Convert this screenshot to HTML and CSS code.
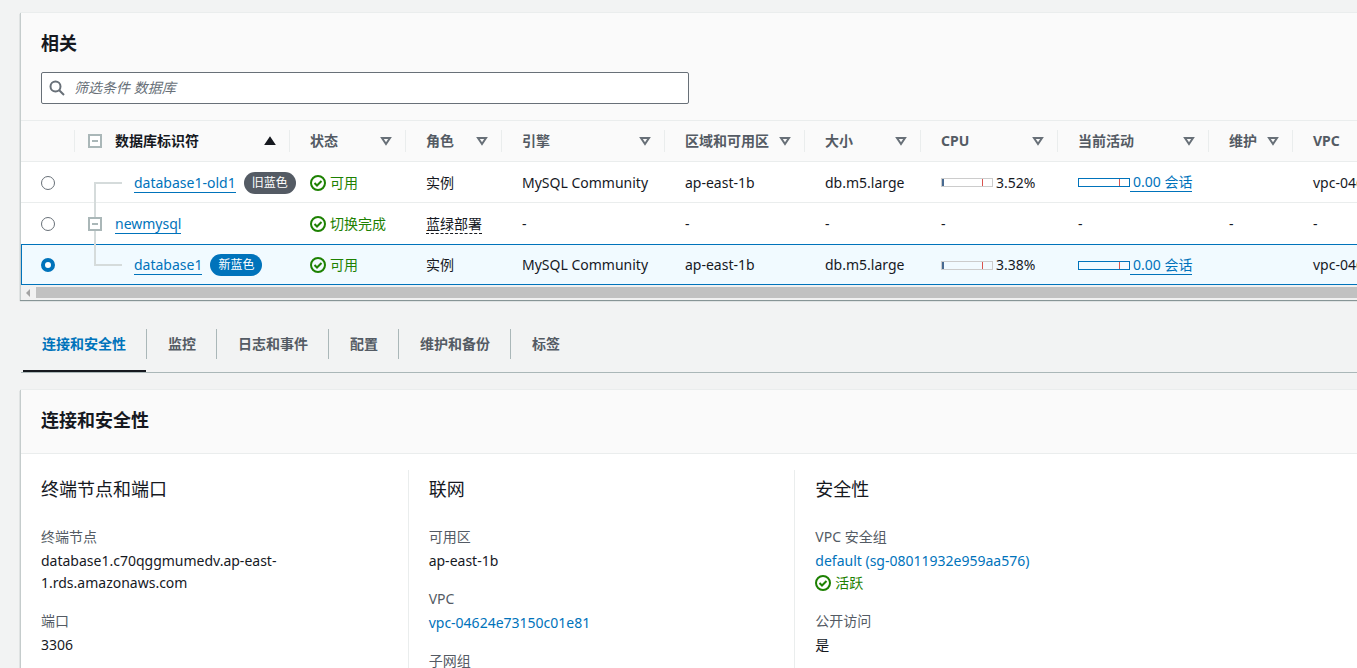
FILE: index.html
```html
<!DOCTYPE html>
<html lang="zh-CN">

<head>
    <meta charset="UTF-8">
    <meta name="viewport" content="width=device-width, initial-scale=1.0">
    <title>database1 - RDS</title>
    <link rel="stylesheet" href="styles.css">
</head>

<body>
    <svg class="sprite" aria-hidden="true">
        <symbol id="icon-ok" viewBox="0 0 16 16">
            <circle cx="8" cy="8" r="7" />
            <path d="M4.5 8l2.5 2.5L11.5 6" />
        </symbol>
        <symbol id="icon-sort" viewBox="0 0 12 10">
            <path d="M2 2h8L6 8z" />
        </symbol>
        <symbol id="icon-toggle" viewBox="0 0 14 14">
            <path d="M1 1h12v12H1zM4 7h6" />
        </symbol>
    </svg>

    <main class="page">
        <section class="panel">
            <header class="panel-header">
                <h2>相关</h2>
                <div class="search">
                    <svg class="search-icon" viewBox="0 0 16 16" aria-hidden="true">
                        <circle cx="6.5" cy="6.5" r="5" />
                        <path d="M10.2 10.2l4.8 4.8" />
                    </svg>
                    <input type="text" class="search-input" placeholder="筛选条件 数据库" aria-label="筛选条件 数据库">
                </div>
            </header>
            <div class="table-wrap">
                <table class="db-table">
                    <colgroup>
                        <col class="col-select">
                        <col class="col-name">
                        <col class="col-status">
                        <col class="col-role">
                        <col class="col-engine">
                        <col class="col-zone">
                        <col class="col-size">
                        <col class="col-cpu">
                        <col class="col-activity">
                        <col class="col-maint">
                        <col class="col-vpc">
                    </colgroup>
                    <thead>
                        <tr>
                            <th></th>
                            <th>
                                <div class="head head-name">
                                    <button class="toggle" aria-label="全部折叠"><svg><use href="#icon-toggle" /></svg></button>
                                    <button class="sort sorted">数据库标识符<svg><use href="#icon-sort" /></svg></button>
                                </div>
                            </th>
                            <th><div class="head"><button class="sort">状态<svg><use href="#icon-sort" /></svg></button></div></th>
                            <th><div class="head"><button class="sort">角色<svg><use href="#icon-sort" /></svg></button></div></th>
                            <th><div class="head"><button class="sort">引擎<svg><use href="#icon-sort" /></svg></button></div></th>
                            <th><div class="head"><button class="sort">区域和可用区<svg><use href="#icon-sort" /></svg></button></div></th>
                            <th><div class="head"><button class="sort">大小<svg><use href="#icon-sort" /></svg></button></div></th>
                            <th><div class="head"><button class="sort">CPU<svg><use href="#icon-sort" /></svg></button></div></th>
                            <th><div class="head"><button class="sort">当前活动<svg><use href="#icon-sort" /></svg></button></div></th>
                            <th><div class="head"><button class="sort">维护<svg><use href="#icon-sort" /></svg></button></div></th>
                            <th><div class="head"><button class="sort">VPC<svg><use href="#icon-sort" /></svg></button></div></th>
                        </tr>
                    </thead>
                    <tbody>
                        <tr>
                            <td class="cell-select"><input type="radio" name="db" aria-label="database1-old1"></td>
                            <td class="cell-name">
                                <span class="branch branch-down"></span>
                                <div class="name child"><a href="#">database1-old1</a><span class="badge badge-old">旧蓝色</span></div>
                            </td>
                            <td><span class="status"><svg><use href="#icon-ok" /></svg>可用</span></td>
                            <td>实例</td>
                            <td>MySQL Community</td>
                            <td>ap-east-1b</td>
                            <td>db.m5.large</td>
                            <td><div class="usage"><span class="bar"><span class="bar-fill" style="width: 3.52%"></span></span>3.52%</div></td>
                            <td><a class="usage usage-link" href="#"><span class="bar"></span><span class="usage-text">0.00 会话</span></a></td>
                            <td></td>
                            <td>vpc-04624e73150c01e81</td>
                        </tr>
                        <tr>
                            <td class="cell-select"><input type="radio" name="db" aria-label="newmysql"></td>
                            <td class="cell-name">
                                <span class="branch branch-through"></span>
                                <div class="name"><button class="toggle" aria-label="折叠"><svg><use href="#icon-toggle" /></svg></button><a href="#">newmysql</a></div>
                            </td>
                            <td><span class="status"><svg><use href="#icon-ok" /></svg>切换完成</span></td>
                            <td><span class="hint">蓝绿部署</span></td>
                            <td>-</td>
                            <td>-</td>
                            <td>-</td>
                            <td>-</td>
                            <td>-</td>
                            <td>-</td>
                            <td>-</td>
                        </tr>
                        <tr class="selected">
                            <td class="cell-select"><input type="radio" name="db" aria-label="database1" checked></td>
                            <td class="cell-name">
                                <span class="branch branch-up"></span>
                                <div class="name child"><a href="#">database1</a><span class="badge badge-new">新蓝色</span></div>
                            </td>
                            <td><span class="status"><svg><use href="#icon-ok" /></svg>可用</span></td>
                            <td>实例</td>
                            <td>MySQL Community</td>
                            <td>ap-east-1b</td>
                            <td>db.m5.large</td>
                            <td><div class="usage"><span class="bar"><span class="bar-fill" style="width: 3.38%"></span></span>3.38%</div></td>
                            <td><a class="usage usage-link" href="#"><span class="bar"></span><span class="usage-text">0.00 会话</span></a></td>
                            <td></td>
                            <td>vpc-04624e73150c01e81</td>
                        </tr>
                    </tbody>
                </table>
            </div>
            <div class="scrollbar">
                <svg class="scroll-arrow" viewBox="0 0 4 8" aria-hidden="true"><path d="M4 0v8L0 4z" /></svg>
                <div class="scroll-thumb"></div>
            </div>
        </section>

        <nav class="tabs">
            <a href="#" class="tab active"><span>连接和安全性</span></a>
            <a href="#" class="tab"><span>监控</span></a>
            <a href="#" class="tab"><span>日志和事件</span></a>
            <a href="#" class="tab"><span>配置</span></a>
            <a href="#" class="tab"><span>维护和备份</span></a>
            <a href="#" class="tab"><span>标签</span></a>
        </nav>

        <section class="panel">
            <header class="panel-header panel-header-plain">
                <h2>连接和安全性</h2>
            </header>
            <div class="details">
                <div class="detail-col">
                    <h3>终端节点和端口</h3>
                    <dl>
                        <dt>终端节点</dt>
                        <dd class="endpoint">database1.c70qggmumedv.ap-east-1.rds.amazonaws.com</dd>
                        <dt>端口</dt>
                        <dd>3306</dd>
                    </dl>
                </div>
                <div class="detail-col">
                    <h3>联网</h3>
                    <dl>
                        <dt>可用区</dt>
                        <dd>ap-east-1b</dd>
                        <dt>VPC</dt>
                        <dd><a href="#">vpc-04624e73150c01e81</a></dd>
                        <dt>子网组</dt>
                        <dd>default</dd>
                    </dl>
                </div>
                <div class="detail-col">
                    <h3>安全性</h3>
                    <dl>
                        <dt>VPC 安全组</dt>
                        <dd><a href="#">default (sg-08011932e959aa576)</a></dd>
                        <dd><span class="status"><svg><use href="#icon-ok" /></svg>活跃</span></dd>
                        <dt>公开访问</dt>
                        <dd>是</dd>
                    </dl>
                </div>
            </div>
        </section>
    </main>
</body>

</html>
```

FILE: styles.css
```css
* {
    box-sizing: border-box;
}

body {
    margin: 0;
    height: 100vh;
    overflow: hidden;
    background-color: #f2f3f3;
    color: #16191f;
    font-family: "Noto Sans", "Noto Sans CJK SC", sans-serif;
    font-size: 14px;
    line-height: 22px;
}

a {
    color: #0073bb;
    text-decoration: none;
}

button {
    padding: 0;
    border: 0;
    background: none;
    color: inherit;
    font: inherit;
}

h2,
h3,
dl,
dd {
    margin: 0;
}

h2 {
    font-size: 18px;
    line-height: 22px;
}

.sprite {
    display: none;
}

.page {
    padding: 13px 0 0 20px;
}

.panel {
    background-color: #fff;
    border-left: 1px solid #c5cccc;
    box-shadow: 0 -1px 0 #eaeded, 0 1px 1px #879596;
}

.panel-header {
    padding: 19px 20px 16px;
    background-color: #fafafa;
    border-bottom: 1px solid #eaeded;
}

.panel-header-plain {
    padding-bottom: 22px;
}

/* search box */
.search {
    display: flex;
    align-items: center;
    gap: 9px;
    max-width: 648px;
    height: 32px;
    margin-top: 18px;
    padding: 0 7px;
    background-color: #fff;
    border: 1px solid #687078;
    border-radius: 2px;
}

.search-icon {
    width: 16px;
    height: 16px;
    fill: none;
    stroke: #687078;
    stroke-width: 2;
}

.search-input {
    flex: 1;
    padding: 0;
    border: 0;
    outline: 0;
    background: none;
    font: inherit;
}

.search-input::placeholder {
    color: #687078;
    font-style: italic;
}

/* table */
.table-wrap {
    overflow: hidden;
}

.db-table {
    width: 1480px;
    table-layout: fixed;
    border-collapse: separate;
    border-spacing: 0;
    white-space: nowrap;
}

.col-select { width: 53px; }
.col-name { width: 215px; }
.col-status { width: 116px; }
.col-role { width: 96px; }
.col-engine { width: 163px; }
.col-zone { width: 140px; }
.col-size { width: 116px; }
.col-cpu { width: 137px; }
.col-activity { width: 151px; }
.col-maint { width: 84px; }

.db-table th {
    height: 41px;
    padding: 0;
    background-color: #fafafa;
    border-bottom: 1px solid #eaeded;
    color: #545b64;
    text-align: left;
}

.head {
    display: flex;
    align-items: center;
    height: 22px;
    padding: 0 13px 0 20px;
    border-left: 1px solid #eaeded;
}

.head-name {
    padding-left: 13px;
}

.sort {
    display: flex;
    flex: 1;
    align-items: center;
    justify-content: space-between;
    font-weight: bold;
}

.sort svg {
    width: 12px;
    height: 10px;
    fill: none;
    stroke: #687078;
    stroke-width: 2;
}

.sorted {
    color: #16191f;
}

.sorted svg {
    fill: #16191f;
    stroke: #16191f;
    transform: rotate(180deg);
}

.toggle {
    display: flex;
    position: relative;
    margin-right: 13px;
    background-color: #fff;
}

.toggle svg {
    width: 14px;
    height: 14px;
    fill: none;
    stroke: #aab7b8;
    stroke-width: 2;
}

.db-table td {
    height: 41px;
    padding: 1px 0 0 21px;
    border-bottom: 1px solid #eaeded;
}

.db-table td.cell-select {
    padding: 2px 0 0 20px;
}

.db-table td.cell-name {
    position: relative;
    padding: 2px 0 0 14px;
}

.db-table tr:nth-child(2) td {
    border-bottom-color: transparent;
}

.db-table .selected td {
    padding-top: 1px;
    background-color: #f1faff;
    border-top: 1px solid #0073bb;
    border-bottom: 1px solid #0073bb;
}

.db-table .selected td:first-child {
    padding-left: 19px;
    border-left: 1px solid #0073bb;
}

input[type="radio"] {
    display: block;
    appearance: none;
    width: 14px;
    height: 14px;
    margin: 0;
    background-color: #fff;
    border: 1px solid #687078;
    border-radius: 50%;
}

input[type="radio"]:checked {
    border: 4px solid #0073bb;
}

.name {
    display: flex;
    align-items: center;
}

.name a {
    line-height: 18px;
    border-bottom: 1px solid #0073bb;
}

.child {
    padding-left: 46px;
}

/* connectors between a deployment and its members */
.branch {
    position: absolute;
    left: 20px;
    border-left: 2px solid #d5dbdb;
}

.branch-down {
    top: 20px;
    bottom: -1px;
    width: 28px;
    border-top: 2px solid #d5dbdb;
}

.branch-through {
    top: 0;
    bottom: -1px;
}

.branch-up {
    top: -1px;
    bottom: 18px;
    width: 28px;
    border-bottom: 2px solid #d5dbdb;
}

.badge {
    margin-left: 8px;
    padding: 0 8px;
    border-radius: 11px;
    color: #fff;
    font-size: 12px;
}

.badge-old {
    background-color: #545b64;
}

.badge-new {
    background-color: #0073bb;
}

.status {
    display: flex;
    align-items: center;
    gap: 4px;
    color: #1d8102;
}

.status svg {
    width: 16px;
    height: 16px;
    fill: none;
    stroke: #1d8102;
    stroke-width: 2;
}

.hint {
    border-bottom: 1px dashed #16191f;
}

.usage {
    display: flex;
    align-items: center;
    gap: 3px;
}

.bar {
    display: flex;
    position: relative;
    width: 52px;
    height: 9px;
    border: 1px solid #ccc;
}

.bar-fill {
    min-width: 2px;
    background-color: #486a91;
}

/* limit mark */
.bar::after {
    content: "";
    position: absolute;
    top: 0;
    bottom: 0;
    left: 80%;
    width: 1px;
    background-color: #d9534f;
}

.usage-link {
    gap: 0;
}

.usage-link .bar {
    border-color: #0073bb;
}

.usage-text {
    padding-left: 3px;
    line-height: 18px;
    border-bottom: 1px solid #0073bb;
}

.scrollbar {
    display: flex;
    align-items: center;
    height: 15px;
    padding-left: 5px;
    gap: 6px;
    background-color: #f1f1f1;
}

.scroll-arrow {
    width: 4px;
    height: 8px;
    fill: #a3a3a3;
}

.scroll-thumb {
    flex: 1;
    height: 11px;
    background-color: #c1c1c1;
}

/* tabs */
.tabs {
    display: flex;
    margin: 29px 0 17px 1px;
    padding-left: 2px;
    border-bottom: 1px solid #aab7b8;
}

.tab {
    height: 43px;
    color: #545b64;
    font-weight: bold;
}

.tab span {
    display: block;
    padding: 4px 20px 4px 21px;
    border-left: 1px solid #aab7b8;
}

.tab.active {
    border-bottom: 2px solid #16191f;
    color: #0073bb;
}

.tab.active span {
    padding-left: 19px;
    border-left: 0;
}

/* details */
.details {
    display: grid;
    grid-template-columns: repeat(3, 1fr);
    max-width: 1160px;
    padding: 16px 0;
}

.detail-col {
    padding: 8px 20px;
    border-left: 1px solid #eaeded;
}

.detail-col:first-child {
    border-left: 0;
}

h3 {
    margin-bottom: 26px;
    font-size: 18px;
    font-weight: normal;
    line-height: 22px;
}

dt {
    margin-bottom: 2px;
    color: #545b64;
}

dd + dt {
    margin-top: 16px;
}

.endpoint {
    max-width: 240px;
}
```
